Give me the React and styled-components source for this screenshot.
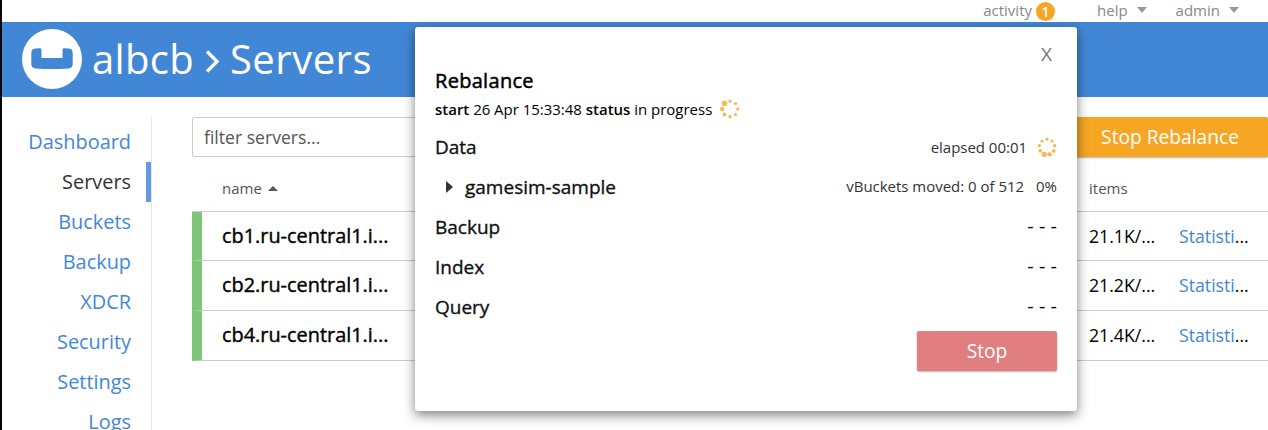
import React from "react";
import styled, { createGlobalStyle } from "styled-components";

const GlobalStyle = createGlobalStyle`
  *, *::before, *::after { box-sizing: border-box; }
  body {
    margin: 0;
    overflow: hidden;
    background: #fff;
    color: #000;
    font-family: "Open Sans", "Noto Sans", sans-serif;
    font-size: 18px;
  }
`;

const Page = styled.div`
  position: relative;
  height: 430px;
  overflow: hidden;
  border-left: 2px solid #05070c;
`;

const TopBar = styled.nav`
  display: flex;
  justify-content: flex-end;
  height: 22px;
  padding-right: 29px;
  font-size: 15px;
  line-height: 20px;
  color: #888;
`;

const TopItem = styled.span`
  display: flex;
  align-items: center;
  height: 20px;
  gap: ${(p) => p.$gap}px;
  margin-left: ${(p) => p.$offset || 0}px;
`;

const Badge = styled.span`
  width: 19px;
  height: 19px;
  margin-top: 3px;
  border-radius: 50%;
  background: #f6a623;
  color: #fff;
  font-size: 14px;
  font-weight: 600;
  line-height: 19px;
  text-align: center;
`;

const Caret = styled.i`
  width: 0;
  height: 0;
  border: 5px solid transparent;
  border-top: 6px solid #999;
  border-bottom: 0;
`;

const Header = styled.header`
  display: flex;
  align-items: center;
  height: 75px;
  padding-left: 20px;
  background: #4287d6;
  color: #fff;
`;

const Logo = styled.svg`
  display: block;
  width: 60px;
  height: 60px;
  margin-bottom: 1px;
`;

const Heading = styled.h1`
  display: flex;
  align-items: center;
  margin: 0 0 2px 10px;
  font-size: 40px;
  font-weight: 400;
  line-height: 54px;
`;

const ClusterName = styled.span`
  letter-spacing: 0.3px;
`;

const SectionName = styled.span`
  letter-spacing: 0.5px;
`;

const Chevron = styled.svg`
  width: 15px;
  height: 23px;
  margin: 5px 10px 0 11px;
`;

const Body = styled.div`
  display: flex;
  height: 333px;
  padding-top: 20px;
`;

const Sidebar = styled.aside`
  flex: none;
  width: 150px;
  padding-top: 5px;
  border-right: 1px solid #e6e6e6;
`;

const NavItem = styled.a`
  display: block;
  height: 40px;
  padding-right: ${(p) => (p.$active ? 15 : 20)}px;
  border-right: ${(p) => (p.$active ? "5px solid #649be0" : "0")};
  color: ${(p) => (p.$active ? "#333" : "#4287d6")};
  font-size: 19.9px;
  line-height: 40px;
  text-align: right;
`;

const Main = styled.main`
  flex: 1;
  min-width: 0;
  padding-left: 40px;
`;

const Toolbar = styled.div`
  display: flex;
  justify-content: space-between;
  height: 40px;
`;

const Filter = styled.div`
  width: 300px;
  padding-left: 11px;
  border: 1px solid #ccc;
  border-radius: 2px;
  color: #555;
  font-size: 17.6px;
  line-height: 39px;
`;

const Button = styled.button`
  height: 40px;
  width: ${(p) => p.$width}px;
  padding: 0;
  border: 0;
  border-radius: 2px;
  background: ${(p) => p.$color};
  box-shadow: 0 1px 2px rgba(0, 0, 0, 0.3);
  color: #fff;
  font: 400 19.2px/40px "Open Sans", "Noto Sans", sans-serif;
  text-align: ${(p) => p.$align || "center"};
  padding-right: ${(p) => p.$end || 0}px;
`;

const TableHead = styled.div`
  display: grid;
  grid-template-columns: 867px 90px 1fr;
  height: 55px;
  padding-left: 30px;
  border-bottom: 1px solid #ccc;
  color: #555;
  font-size: 15px;
  line-height: 63px;
`;

const SortMark = styled.i`
  display: inline-block;
  margin: 0 0 3px 6px;
  border: 5px solid transparent;
  border-bottom: 5px solid #555;
  border-top: 0;
`;

const Row = styled.div`
  display: grid;
  grid-template-columns: 867px 90px 1fr;
  height: ${(p) => p.$height}px;
  padding-left: 20px;
  border-left: 10px solid #7fc678;
  border-bottom: 1px solid #ccc;
  font-size: 17.7px;
  line-height: ${(p) => p.$height - 1}px;
`;

const ServerName = styled.span`
  font-size: 19.9px;
  line-height: 47px;
  -webkit-text-stroke: 0.4px currentColor;
`;

const Link = styled.a`
  color: #4287d6;
`;

const Dialog = styled.section`
  position: absolute;
  top: 27px;
  left: 413px;
  width: 662px;
  height: 384px;
  padding: 0 20px;
  border-radius: 3px;
  background: #fff;
  box-shadow: 0 4px 12px rgba(0, 0, 0, 0.5);
`;

const CloseRow = styled.div`
  height: 40px;
  padding: 14px 5px 0 0;
  color: #777;
  font-size: 19px;
  line-height: 26px;
  text-align: right;
`;

const DialogTitle = styled.h2`
  margin: 0;
  font-size: 20px;
  font-weight: 400;
  letter-spacing: 0.3px;
  line-height: 28px;
  -webkit-text-stroke: 0.5px currentColor;
`;

const StatusLine = styled.div`
  display: flex;
  align-items: center;
  height: 28px;
  font-size: 15px;
  letter-spacing: -0.02px;
  white-space: pre;
  b { font-weight: 600; }
`;

const ServiceList = styled.div`
  padding-top: 4px;
`;

const Service = styled.div`
  display: flex;
  align-items: center;
  justify-content: space-between;
  height: 40px;
  color: #111;
  font-size: 19px;
  line-height: 26px;
`;

const ServiceName = styled.span`
  display: flex;
  align-items: center;
  gap: 12px;
  padding-left: ${(p) => p.$indent || 0}px;
  padding-bottom: 1px;
  -webkit-text-stroke: 0.35px currentColor;
`;

const Expand = styled.i`
  border: 6px solid transparent;
  border-left: 7px solid #333;
  border-right: 0;
`;

const Detail = styled.span`
  display: flex;
  align-items: center;
  gap: ${(p) => p.$gap || 0}px;
  margin-bottom: ${(p) => p.$lift || 0}px;
  color: #333;
  font-size: 15px;
  letter-spacing: -0.02px;
`;

const Dashes = styled.span`
  padding-bottom: 3px;
  font-size: 20px;
`;

const Actions = styled.div`
  display: flex;
  justify-content: flex-end;
  padding-top: 4px;
`;

const SpinnerSvg = styled.svg`
  width: 20px;
  height: 20px;
  flex: none;
  margin-left: ${(p) => p.$offset || 0}px;
`;

const radii = [2.7, 2.2, 1.9, 1.7, 1.6, 1.6, 1.6, 1.6, 1.8];

function Spinner({ from, count, offset }) {
  return (
    <SpinnerSvg viewBox="0 0 20 20" $offset={offset}>
      {radii.slice(0, count).map((r, i) => {
        const a = ((from - (i * 360) / count) * Math.PI) / 180;
        return (
          <circle key={i} cx={10 + 7.8 * Math.cos(a)} cy={10 + 7.8 * Math.sin(a)} r={r} fill="#f9b856" />
        );
      })}
    </SpinnerSvg>
  );
}

const nav = ["Dashboard", "Servers", "Buckets", "Backup", "XDCR", "Security", "Settings", "Logs"];

const servers = [
  { name: "cb1.ru-central1.i...", items: "21.1K/...", height: 49 },
  { name: "cb2.ru-central1.i...", items: "21.2K/...", height: 50 },
  { name: "cb4.ru-central1.i...", items: "21.4K/...", height: 50 },
];

export default function App() {
  return (
    <Page>
      <GlobalStyle />
      <TopBar>
        <TopItem $gap={4}>activity<Badge>1</Badge></TopItem>
        <TopItem $gap={9} $offset={42}>help<Caret /></TopItem>
        <TopItem $gap={9} $offset={29}>admin<Caret /></TopItem>
      </TopBar>
      <Header>
        <Logo viewBox="0 0 60 60">
          <circle cx="30" cy="30" r="30" fill="#fff" />
          <path
            d="M9.3 24Q9.3 19.8 13 19.5L18 19.2Q19.5 19.2 19.5 21V29H40.5V21Q40.5 19.2 42 19.2L47 19.5Q50.7 19.8 50.7 24V35Q50.7 39 46.5 39.4Q30 40.6 13.5 39.4Q9.3 39 9.3 35Z"
            fill="#4287d6"
          />
        </Logo>
        <Heading>
          <ClusterName>albcb</ClusterName>
          <Chevron viewBox="0 0 15 23" fill="none" stroke="#fff" strokeWidth="3.4">
            <path d="M2 1.5L12 11.5L2 21.5" />
          </Chevron>
          <SectionName>Servers</SectionName>
        </Heading>
      </Header>
      <Body>
        <Sidebar>
          {nav.map((n) => (
            <NavItem key={n} $active={n === "Servers"}>{n}</NavItem>
          ))}
        </Sidebar>
        <Main>
          <Toolbar>
            <Filter>filter servers...</Filter>
            <Button $width={220} $color="#f6a623" $align="right" $end={29}>Stop Rebalance</Button>
          </Toolbar>
          <TableHead>
            <span>name<SortMark /></span>
            <span>items</span>
          </TableHead>
          {servers.map((s) => (
            <Row key={s.name} $height={s.height}>
              <ServerName>{s.name}</ServerName>
              <span>{s.items}</span>
              <span><Link>Statisti</Link>...</span>
            </Row>
          ))}
        </Main>
      </Body>
      <Dialog>
        <CloseRow>X</CloseRow>
        <DialogTitle>Rebalance</DialogTitle>
        <StatusLine>
          <span><b>start</b> 26 Apr 15:33:48 <b>status</b> in progress</span>
          <Spinner from={225} count={8} offset={8} />
        </StatusLine>
        <ServiceList>
          <Service>
            <ServiceName>Data</ServiceName>
            <Detail $gap={10}>elapsed 00:01<Spinner from={110} count={9} /></Detail>
          </Service>
          <Service>
            <ServiceName $indent={11}><Expand />gamesim-sample</ServiceName>
            <Detail $gap={12} $lift={2}><span>vBuckets moved: 0 of 512</span><span>0%</span></Detail>
          </Service>
          {["Backup", "Index", "Query"].map((name) => (
            <Service key={name}>
              <ServiceName>{name}</ServiceName>
              <Dashes>- - -</Dashes>
            </Service>
          ))}
        </ServiceList>
        <Actions>
          <Button $width={140} $color="#e07e80">Stop</Button>
        </Actions>
      </Dialog>
    </Page>
  );
}
